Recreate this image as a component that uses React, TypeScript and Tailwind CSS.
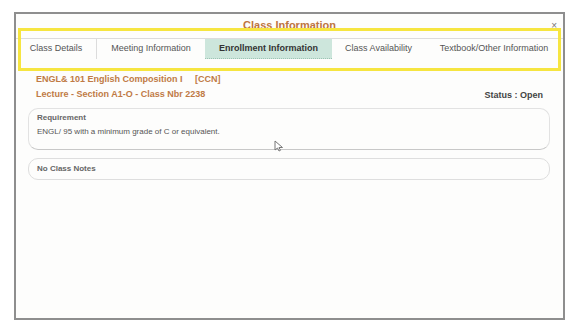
import React from 'react';

const tabs = [
  { label: 'Class Details', w: 'w-[81px]' },
  { label: 'Meeting Information', w: 'w-[108px]' },
  { label: 'Enrollment Information', w: 'w-[127px]', active: true },
  { label: 'Class Availability', w: 'w-[93px]' },
  { label: 'Textbook/Other Information', w: 'flex-1' },
];

export default function App() {
  return (
    <div className="relative w-[579px] h-[329px] bg-white overflow-hidden" style={{ fontFamily: '"Liberation Sans", Arial, sans-serif' }}>
      <div className="absolute left-[14px] top-[12px] w-[551px] h-[308px] border-2 border-[#8e8e8e] bg-[#fdfdfc] flex flex-col">
        {/* Title bar */}
        <div className="relative h-[24px] flex items-start justify-center">
          <span className="text-[11px] font-bold text-[#bd7440] leading-none mt-[6px]">Class Information</span>
          <span className="absolute right-[6px] top-[7px] text-[10px] text-[#777] leading-none">×</span>
        </div>

        {/* Tabs */}
        <div className="flex h-[21px] border-t border-[#dcdcdc] text-[9px] text-[#555]">
          {tabs.map((t, i) => (
            <div key={t.label}
              className={`${t.w} flex items-center justify-center ${t.active ? 'bg-[#cde6dc] font-bold text-[#333] border-b border-dotted border-[#9cc4b4]' : ''} ${i === 0 ? 'border-r border-[#dcdcdc]' : ''}`}>
              {t.label}
            </div>
          ))}
        </div>

        {/* Heading */}
        <div className="px-[20px] pt-[14px] text-[9px] font-bold">
          <p className="text-[#c07a45] leading-[12px]">ENGL&amp; 101 English Composition I&nbsp;&nbsp;&nbsp;&nbsp;&nbsp;[CCN]</p>
          <div className="flex justify-between mt-[3px] leading-[12px]">
            <p className="text-[#c07a45]">Lecture - Section A1-O - Class Nbr 2238</p>
            <p className="text-[#444] mt-[1px]">Status : Open</p>
          </div>
        </div>

        {/* Cards */}
        <div className="px-[12px] mt-[7px] flex flex-col gap-[8px]">
          <div className="h-[42px] rounded-[10px] border border-[#e2e2e2] border-b-[#c8c8c8] px-[8px] pt-[3px] mr-[1px]">
            <p className="text-[8px] font-bold text-[#666] leading-[12px]">Requirement</p>
            <p className="text-[8px] text-[#555] leading-[10px] mt-[3px]">ENGL/ 95 with a minimum grade of C or equivalent.</p>
          </div>
          <div className="h-[22px] rounded-[10px] border border-[#dedede] px-[8px] flex items-center mr-[1px]">
            <p className="text-[8px] font-bold text-[#666] leading-none">No Class Notes</p>
          </div>
        </div>
      </div>

      {/* Highlight annotation */}
      <div className="absolute left-[18px] top-[28px] w-[543px] h-[43px] border-[3px] border-[#f6e540]" />

      {/* Cursor */}
      <svg className="absolute left-[274px] top-[140px]" width="11" height="12" viewBox="0 0 11 12">
        <path d="M1 1 L1 10 L3.5 8 L5 11 L6.5 10.3 L5 7.5 L8.5 7.5 Z" fill="#fff" stroke="#777" strokeWidth="1" strokeLinejoin="round" />
      </svg>
    </div>
  );
}
